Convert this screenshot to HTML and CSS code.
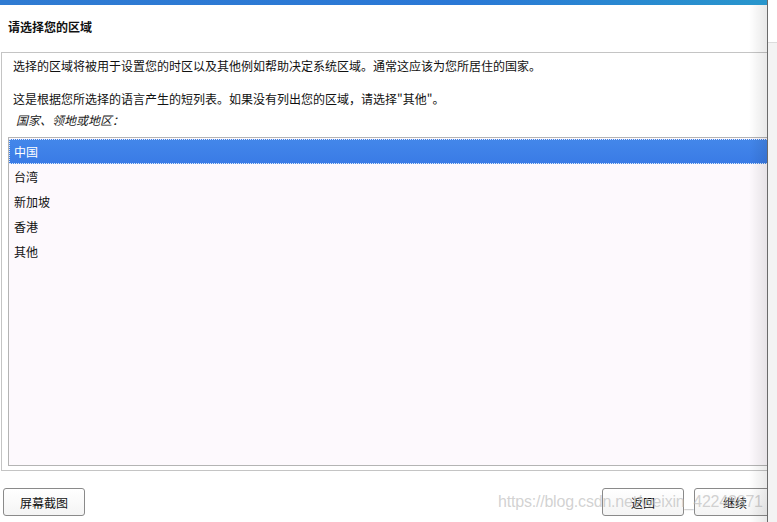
FILE: index.html
```html
<!DOCTYPE html>
<html lang="zh-CN">
<head>
    <meta charset="UTF-8">
    <meta name="viewport" content="width=device-width, initial-scale=1.0">
    <title>请选择您的区域</title>
    <link rel="stylesheet" href="styles.css">
</head>
<body>

    <div class="installer">
        <div class="topbar"></div>
        <div class="header">
            <h2>请选择您的区域</h2>
        </div>

        <div class="panel">
            <p class="intro">选择的区域将被用于设置您的时区以及其他例如帮助决定系统区域。通常这应该为您所居住的国家。</p>
            <p class="intro second">这是根据您所选择的语言产生的短列表。如果没有列出您的区域，请选择"其他"。</p>
            <p class="caption">国家、领地或地区：</p>
            <ul class="region-list">
                <li class="selected">中国</li>
                <li>台湾</li>
                <li>新加坡</li>
                <li>香港</li>
                <li>其他</li>
            </ul>
        </div>

        <div class="footer">
            <button class="btn">屏幕截图</button>
            <button class="btn back">返回</button>
            <button class="btn next">继续</button>
        </div>

        <span class="watermark">https://blog.csdn.net/weixin_42243871</span>
    </div>

    <div class="side-strip"></div>

</body>
</html>
```

FILE: styles.css
```css
body {
    font-family: "Noto Sans CJK SC", "Liberation Sans", sans-serif;
    font-size: 12px;
    color: #111;
    background-color: #fff;
    margin: 0;
    padding: 0;
    display: flex;
    height: 522px;
    overflow: hidden;
}

.installer {
    width: 767px;
    flex-shrink: 0;
    display: flex;
    flex-direction: column;
    background-color: #fff;
    position: relative;
    overflow: hidden;
    border-right: 1px solid #6a6a6a;
}

/* window edge shading on the right */
.installer::after {
    content: "";
    position: absolute;
    top: 5px;
    right: 0;
    width: 18px;
    bottom: 0;
    background: linear-gradient(to right, rgba(0, 0, 0, 0), rgba(0, 0, 0, 0.09));
    pointer-events: none;
}

.topbar {
    height: 5px;
    background: linear-gradient(to right, #2f7bd2, #2a78d6 60%, #2896cc);
}

.header {
    height: 47px;
    box-sizing: border-box;
    display: flex;
    align-items: center;
    padding: 0 0 4px 8px;
}

.header h2 {
    margin: 0;
    font-size: 12px;
    font-weight: bold;
    color: #111;
}

.panel {
    margin-left: 1px;
    margin-right: -4px;
    height: 419px;
    box-sizing: border-box;
    border: 1px solid #c4c4c4;
    display: flex;
    flex-direction: column;
}

.intro {
    margin: 4px 0 0 11px;
    line-height: 18px;
}

.intro.second {
    margin-top: 15px;
}

.caption {
    margin: 3px 0 0 14px;
    line-height: 18px;
    font-style: italic;
    color: #222;
}

.region-list {
    list-style: none;
    margin: 8px 0 4px 6px;
    padding: 1px 0 0 0;
    flex: 1;
    border: 1px solid #b4b4b4;
    background-color: #fdf9fd;
}

.region-list li {
    height: 25px;
    line-height: 25px;
    padding-left: 5px;
    box-sizing: border-box;
}

.region-list li.selected {
    background: linear-gradient(to bottom, #4387ea, #3a7be6);
    color: #fff;
    border: 1px dotted #dfe9fb;
    padding-left: 4px;
    line-height: 23px;
}

.footer {
    flex: 1;
    display: flex;
    align-items: center;
    padding: 0 0 0 3px;
    gap: 10px;
    margin-right: -9px;
}

.btn {
    height: 28px;
    width: 82px;
    border: 1px solid #8a8a8a;
    border-radius: 3px;
    background: linear-gradient(to bottom, #ffffff, #f4f4f4);
    font-family: inherit;
    font-size: 12px;
    color: #111;
    padding: 0;
    margin-top: 11px;
    flex-shrink: 0;
}

.btn.back {
    margin-left: auto;
}

/* blog watermark printed over the screenshot */
.watermark {
    position: absolute;
    left: 498px;
    top: 493px;
    font-family: "Liberation Sans", sans-serif;
    font-size: 16px;
    letter-spacing: -0.2px;
    color: rgba(185, 185, 185, 0.65);
    white-space: nowrap;
    pointer-events: none;
}

.side-strip {
    flex: 1;
    background: linear-gradient(to bottom, #fff 42px, #dcdcdc 42px, #dcdcdc 43px, #f3f3f3 43px);
}
```
